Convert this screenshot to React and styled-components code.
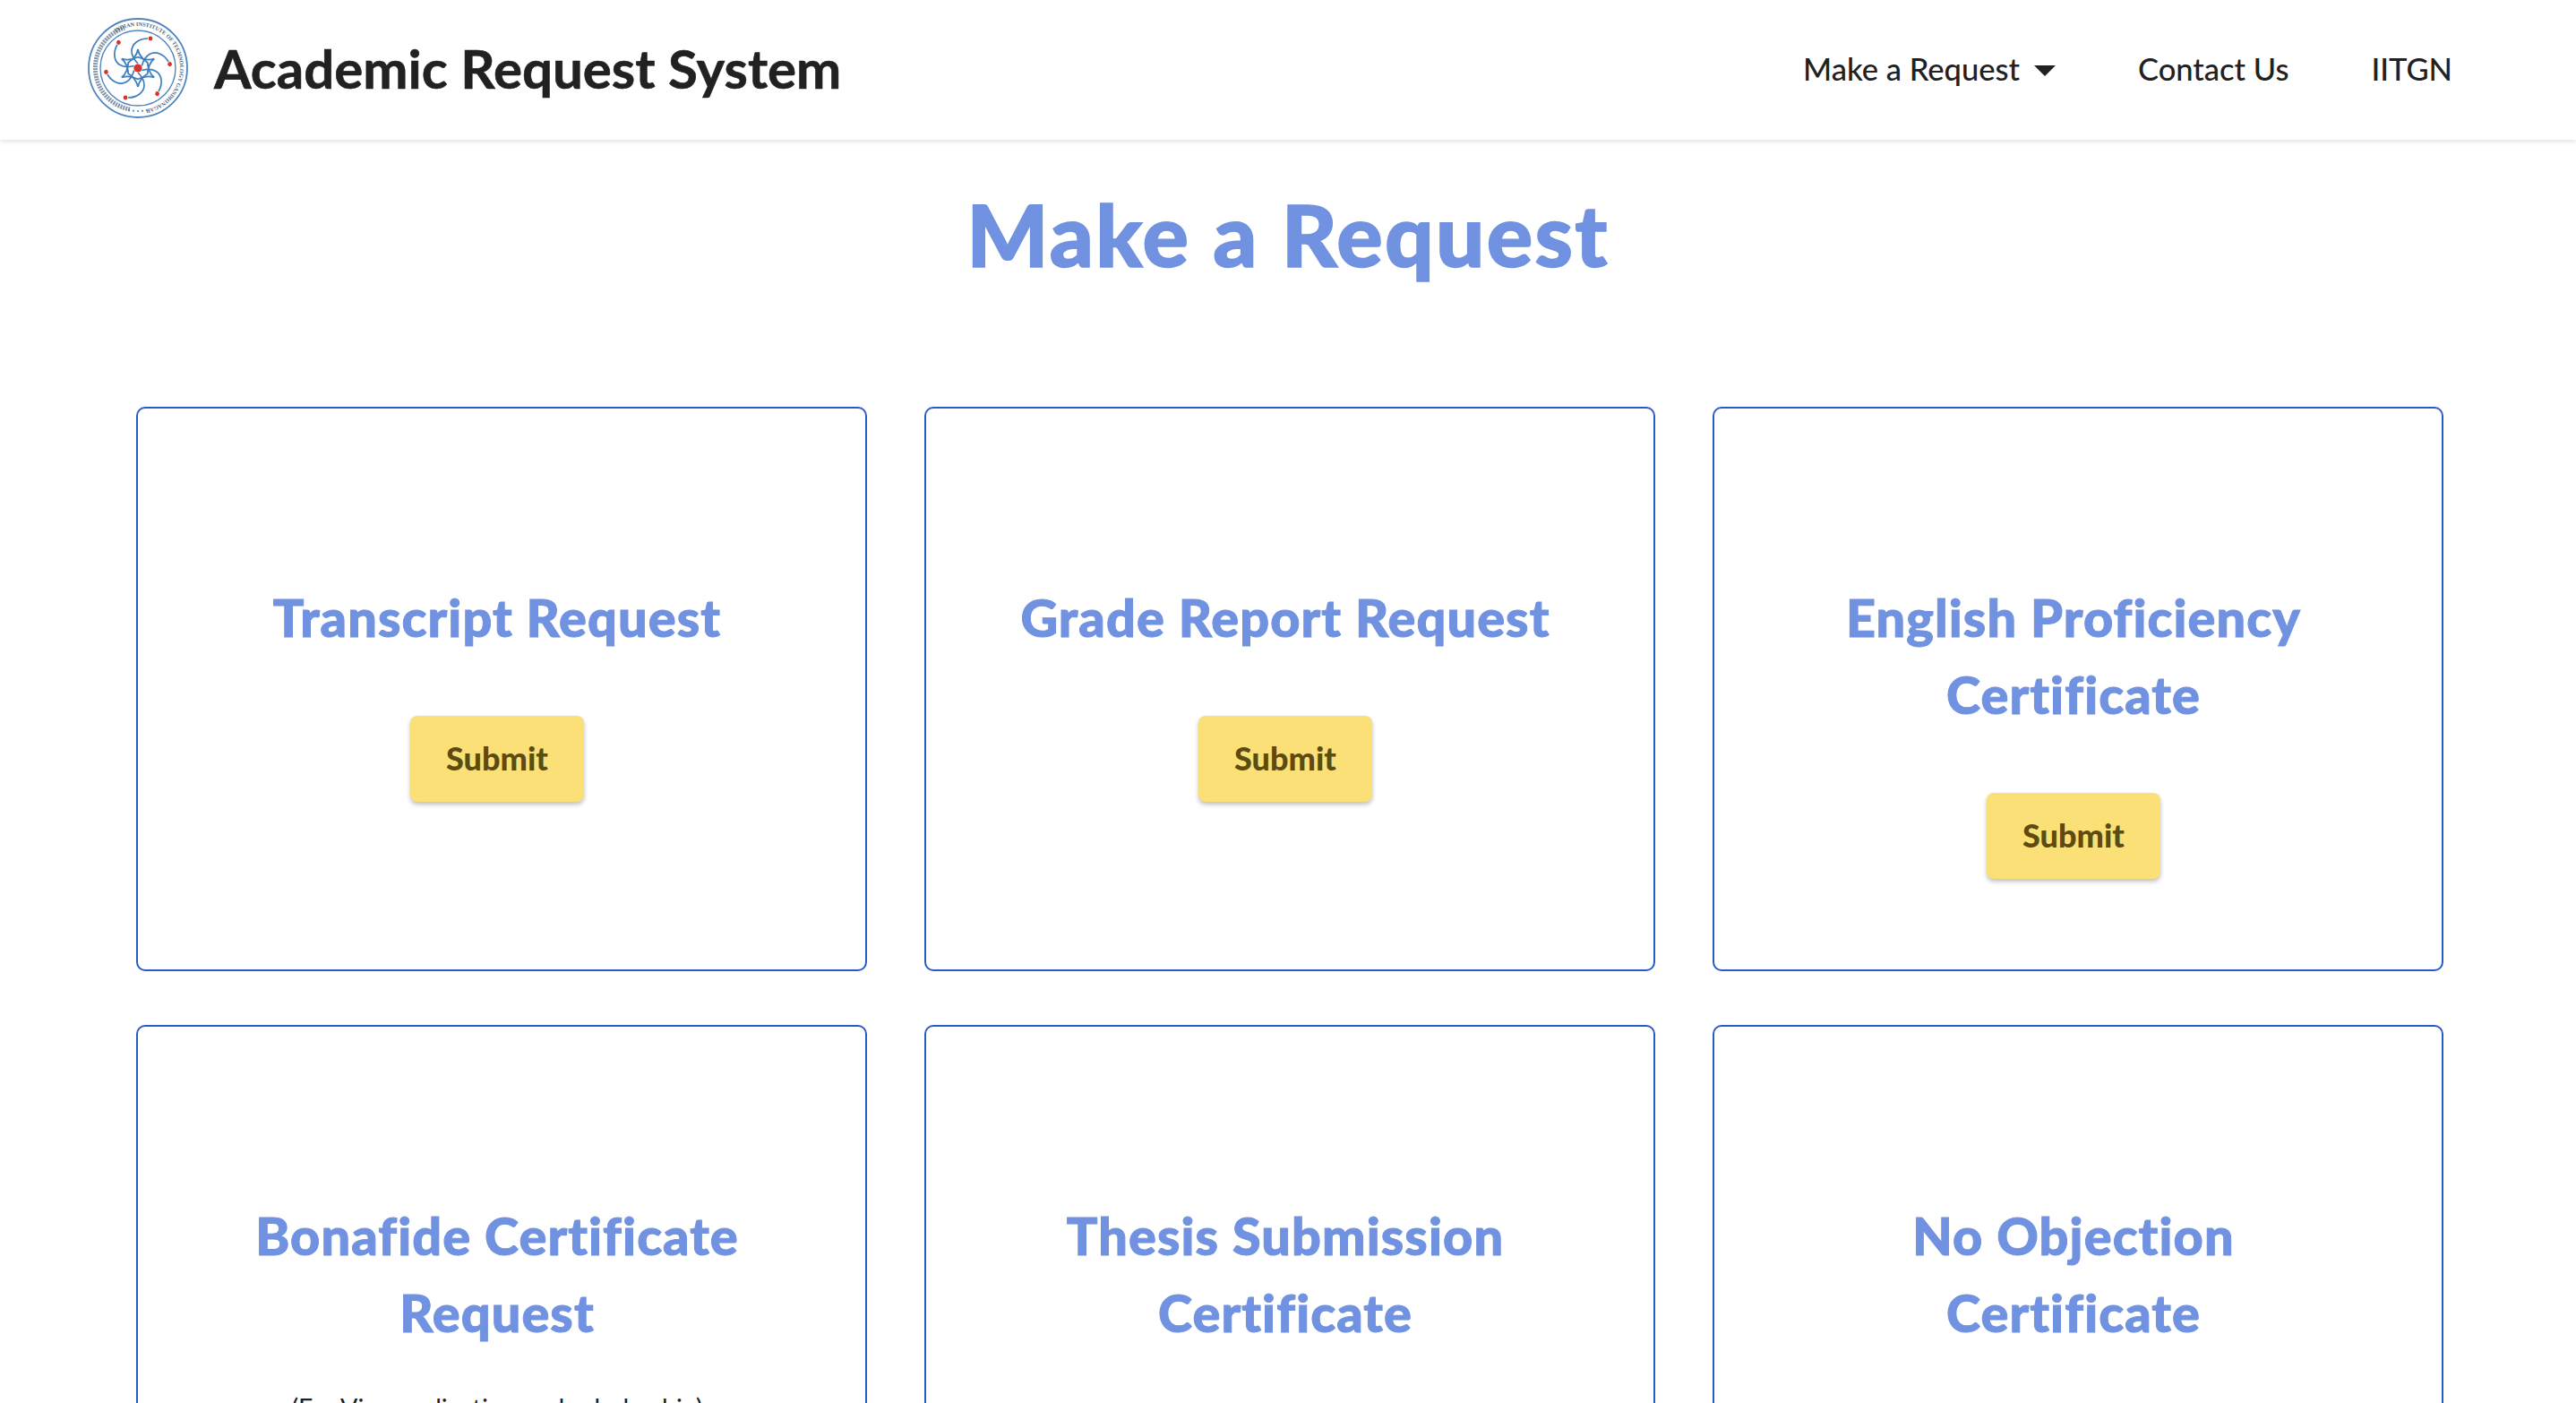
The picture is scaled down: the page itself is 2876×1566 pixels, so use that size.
import React from 'react';
import styled, { createGlobalStyle } from 'styled-components';

const GlobalStyle = createGlobalStyle`
	html, body {
		margin: 0;
		padding: 0;
		height: 100%;
		overflow: hidden;
		background: #fff;
		font-family: 'Lato', 'Liberation Sans', sans-serif;
	}
`;

const Navbar = styled.nav`
	display: flex;
	align-items: center;
	justify-content: space-between;
	height: 156px;
	padding: 0 138px 4px 97px;
	box-sizing: border-box;
	background: #fff;
	box-shadow: 0 2px 5px rgba(0, 0, 0, 0.12);
`;

const Brand = styled.div`
	display: flex;
	align-items: center;
	gap: 28px;
	font-size: 60px;
	font-weight: 700;
	-webkit-text-stroke: 0.6px #212121;
	color: #212121;
`;

const NavLinks = styled.div`
	display: flex;
	align-items: center;
	gap: 92px;
`;

const NavLink = styled.a`
	display: flex;
	align-items: center;
	gap: 16px;
	font-size: 34.5px;
	font-weight: 500;
	color: #212121;
`;

const Caret = styled.span`
	width: 0;
	height: 0;
	border-left: 12px solid transparent;
	border-right: 12px solid transparent;
	border-top: 12px solid #212121;
	margin-top: 6px;
`;

const PageTitle = styled.h1`
	margin: 0;
	padding: 44px 0 132px;
	font-size: 96px;
	line-height: 122px;
	font-weight: 900;
	letter-spacing: 2.3px;
	-webkit-text-stroke: 1.5px #7092e0;
	text-align: center;
	color: #7092e0;
`;

const CardGrid = styled.div`
	display: grid;
	grid-template-columns: repeat(3, 816px);
	column-gap: 64px;
	row-gap: 60px;
	padding-left: 152px;
`;

const Card = styled.div`
	box-sizing: border-box;
	display: flex;
	flex-direction: column;
	align-items: center;
	min-height: 630px;
	padding: 190px 30px 0 20px;
	border: 2px solid #2b5bc4;
	border-radius: 10px;
`;

const CardTitle = styled.h2`
	max-width: 640px;
	margin: 0;
	font-size: 57.6px;
	line-height: 86px;
	font-weight: 900;
	letter-spacing: 1.1px;
	-webkit-text-stroke: 1px #7092e0;
	text-align: center;
	color: #7092e0;
`;

const CardNote = styled.p`
	margin: 46px 0 0;
	font-size: 28.5px;
	color: #212121;
`;

const SubmitButton = styled.button`
	width: 194px;
	height: 96px;
	margin-top: 67px;
	padding: 0 0 3px;
	border: 0;
	border-radius: 8px;
	background: #fae076;
	box-shadow: 0 3px 5px rgba(0, 0, 0, 0.25);
	font-family: inherit;
	font-size: 36px;
	font-weight: 900;
	color: #5e4b10;
`;

const ARMS = [0, 60, 120, 180, 240, 300];
const STARS = [-12, -6, 0, 6, 12];

// IITGN seal: ring of lettering round six swirling arms with red dots
const Logo = () => (
	<svg width="114" height="114" viewBox="0 0 114 114">
		<defs>
			<path id="sealText" d="M57 104 a47 47 0 1 1 0.01 0" />
		</defs>
		<circle cx="57" cy="57" r="55" fill="none" stroke="#4f86c0" strokeWidth="1.8" />
		<circle cx="57" cy="57" r="42" fill="none" stroke="#4f86c0" strokeWidth="1.4" />
		<path
			d="M48 103 A47 47 0 0 1 42 12"
			fill="none"
			stroke="#5f7590"
			strokeWidth="5"
			strokeDasharray="2 1"
			opacity="0.75"
		/>
		<text fontSize="6.2" fontWeight="700" fontFamily="Liberation Serif, serif" fill="#4a6482">
			<textPath href="#sealText" startOffset="41%" textLength="165">INDIAN INSTITUTE OF TECHNOLOGY GANDHINAGAR</textPath>
		</text>
		{ARMS.map((angle) => (
			<g key={angle} transform={`rotate(${angle} 57 57)`} fill="none" stroke="#3f7fbf">
				<path d="M68 24 C58 24 50 30 50 38 C50 44 53 48 57 52" strokeWidth="1.7" />
				<path d="M57 36 C56 42 52 47 46 51" strokeWidth="1.8" />
				<path d="M57 36 C58 42 62 47 68 51" strokeWidth="1.8" />
				<circle cx="71" cy="24" r="2.4" fill="#d8352a" stroke="none" />
			</g>
		))}
		{STARS.map((a) => (
			<circle key={a} cx="57" cy="105" r="1.1" fill="#4f86c0" transform={`rotate(${a} 57 57)`} />
		))}
		<circle cx="57" cy="57" r="4.6" fill="#d8352a" />
	</svg>
);

const REQUESTS = [
	{ title: 'Transcript Request' },
	{ title: 'Grade Report Request' },
	{ title: 'English Proficiency Certificate' },
	{ title: 'Bonafide Certificate Request', note: '(For Visa application and scholarship)' },
	{ title: 'Thesis Submission Certificate' },
	{ title: 'No Objection Certificate' },
];

const App = () => (
	<>
		<GlobalStyle />
		<Navbar>
			<Brand>
				<Logo />
				Academic Request System
			</Brand>
			<NavLinks>
				<NavLink>
					Make a Request
					<Caret />
				</NavLink>
				<NavLink>Contact Us</NavLink>
				<NavLink>IITGN</NavLink>
			</NavLinks>
		</Navbar>
		<PageTitle>Make a Request</PageTitle>
		<CardGrid>
			{REQUESTS.map((req) => (
				<Card key={req.title}>
					<CardTitle>{req.title}</CardTitle>
					{req.note && <CardNote>{req.note}</CardNote>}
					<SubmitButton>Submit</SubmitButton>
				</Card>
			))}
		</CardGrid>
	</>
);

export default App;
